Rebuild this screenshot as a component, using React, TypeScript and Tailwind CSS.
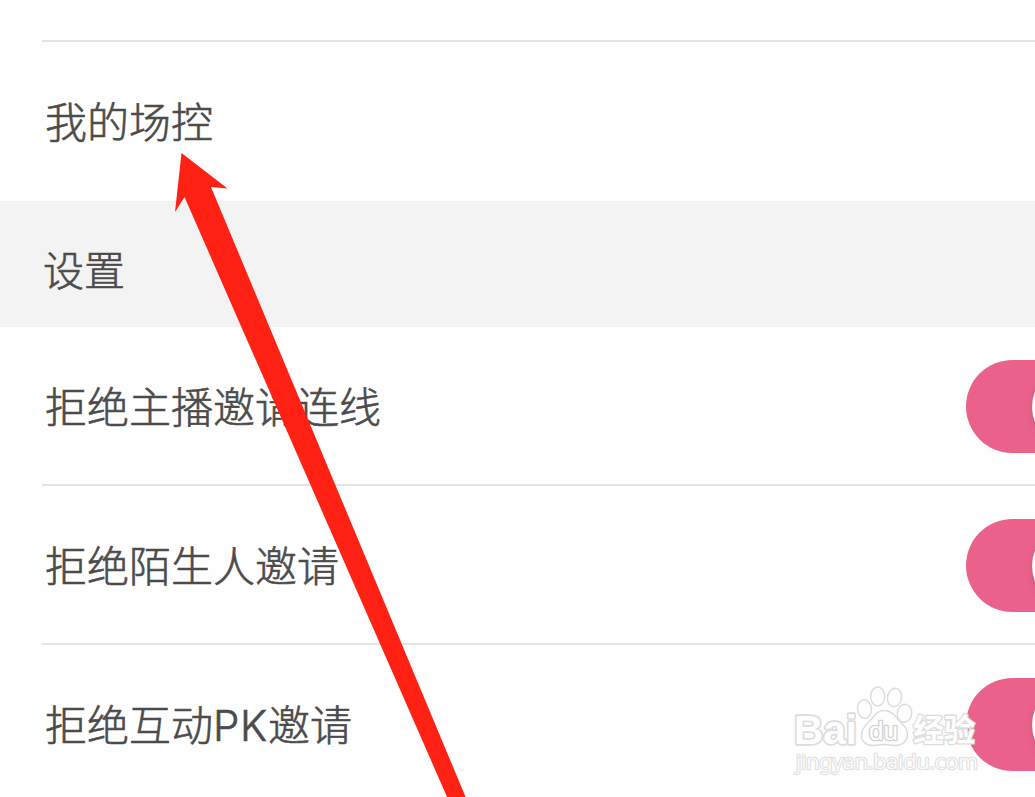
import React from 'react';

interface RowProps {
  label: React.ReactNode;
  toggle?: boolean;
  last?: boolean;
}

const Toggle: React.FC = () => (
  <button
    role="switch"
    aria-checked="true"
    className="flex h-[93px] w-[153px] shrink-0 items-center justify-end rounded-full bg-[#ea628c] pr-[5px]"
  >
    <span className="h-[82px] w-[82px] rounded-full bg-white shadow-[0_3px_6px_rgba(90,70,80,0.25)]"></span>
  </button>
);

const Row: React.FC<RowProps> = ({ label, toggle, last }) => (
  <div className={`ml-[42px] flex h-[159px] items-center justify-between pl-[3px] ${last ? '' : 'border-b-2 border-[#e4e4e4]'}`}>
    <span className={`whitespace-nowrap ${last ? 'pt-[2px]' : 'pt-1'}`}>{label}</span>
    {toggle && <div className="-mr-[84px] shrink-0 pt-[2px]"><Toggle /></div>}
  </div>
);

const Watermark: React.FC = () => (
  <svg
    className="absolute left-[785px] top-[680px]"
    width="200"
    height="100"
    viewBox="785 680 200 100"
    fill="#fefefe"
    stroke="#dcdcdc"
    strokeWidth="1.4"
    strokeLinejoin="round"
  >
    <text x="794" y="743.500" fontSize="41" fontWeight="700" fontFamily="'Liberation Sans', sans-serif" strokeWidth="3.4" paintOrder="stroke" textLength="63" lengthAdjust="spacingAndGlyphs">Bai</text>
    <ellipse cx="864.5" cy="709" rx="7" ry="9.3" transform="rotate(-6 864.5 709)" />
    <ellipse cx="877.7" cy="696.5" rx="7" ry="9.5" />
    <ellipse cx="894.5" cy="697.5" rx="7" ry="9.3" transform="rotate(10 894.5 697.5)" />
    <ellipse cx="904.5" cy="713.3" rx="7.2" ry="9" transform="rotate(8 904.5 713.3)" />
    <path d="M884 710.5c-6 0-9 4-12 8-3 4-10 8-10.500 16-.500 7 5 11 11 11 4 0 7-1 11.500-1s7 1 11 1c7 0 12-4 12.500-10 .500-7-4-10-8.500-15-4-5-8-10-15-10z" />
    <text x="869" y="739.500" fontSize="25" fontWeight="400" fontFamily="'Liberation Sans', sans-serif" stroke="#d2d2d2" strokeWidth="2.6" paintOrder="stroke" textLength="29" lengthAdjust="spacingAndGlyphs">du</text>
    <text x="913" y="741" fontSize="31" fontWeight="700" fontFamily="'Noto Sans CJK SC', sans-serif" strokeWidth="2.6" paintOrder="stroke" textLength="62">经验</text>
    <text x="796" y="769" fontSize="20" stroke="#e2e2e2" strokeWidth="2.4" paintOrder="stroke" fontFamily="'Noto Sans', sans-serif" textLength="182" lengthAdjust="spacingAndGlyphs">jingyan.baidu.com</text>
  </svg>
);

const App: React.FC = () => {
  return (
    <div className="relative h-[797px] w-[1035px] overflow-hidden bg-[#fefefe] font-[Inter,'Noto_Sans_CJK_SC_Light','Noto_Sans_CJK_SC',sans-serif] text-[42px] font-light leading-[60px] text-[#4b4b4b] [-webkit-text-stroke:0.6px_#4b4b4b]">
      <div className="ml-[42px] h-[42px] border-b-2 border-[#e4e4e4]"></div>
      <Row label="我的场控" last />
      <div className="flex h-[126px] items-center bg-[#f3f3f3] pl-[43px] pt-[14px]">
        <h2 className="text-[41px] font-light">设置</h2>
      </div>
      <Row label="拒绝主播邀请连线" toggle />
      <Row label="拒绝陌生人邀请" toggle />
      <Row label={<>拒绝互动<span className="tracking-[0.7px]">PK</span>邀请</>} toggle />

      <Watermark />

      {/* pointer to the first row */}
      <svg className="pointer-events-none absolute inset-0" width="1035" height="797" fill="#ff2113">
        <polygon points="181.500,153 227.500,188.500 211,187 466,798 447.500,798 184.500,197 175,212" />
      </svg>
    </div>
  );
};

export default App;
